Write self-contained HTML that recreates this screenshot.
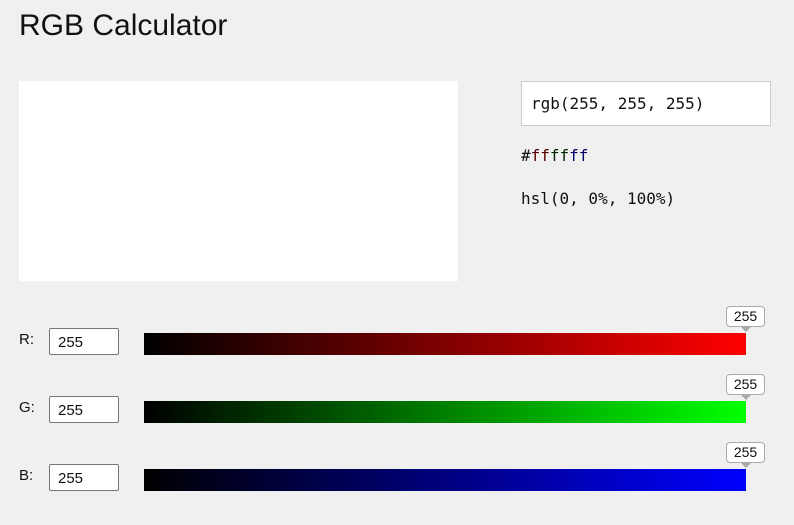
<!DOCTYPE html>
<html><head><style>
body{margin:0;width:794px;height:525px;background:#f0f0f0;font-family:"Liberation Sans",sans-serif;position:relative;overflow:hidden}
.a{position:absolute}
h1{position:absolute;left:19px;top:9px;margin:0;font-weight:normal;font-size:30px;color:#111}
.mono{font-family:"DejaVu Sans Mono","Liberation Mono",monospace;font-size:16px;color:#111}
.inp{position:absolute;left:49px;width:70px;height:27px;background:#fff;border:1px solid #777;border-radius:2px;box-sizing:border-box;font-size:15px;padding:5px 0 0 8px;color:#111}
.lab{position:absolute;left:19px;font-size:15px;color:#111}
.bar{position:absolute;left:144px;width:602px;height:22px}
.tip{position:absolute;left:726px;width:39px;height:21px;background:#fff;border:1px solid #aaa;border-radius:4px;box-sizing:border-box;font-size:14px;text-align:center;line-height:19px;color:#111}
.tip:after{content:"";position:absolute;left:14px;bottom:-6px;border:5px solid transparent;border-top:5px solid #aaa;border-bottom:0}
</style></head><body>
<h1>RGB Calculator</h1>
<div class="a" style="left:19px;top:81px;width:439px;height:200px;background:#fff"></div>
<div class="a mono" style="left:521px;top:81px;width:250px;height:45px;background:#fff;border:1px solid #ccc;box-sizing:border-box;padding:12px 0 0 9px">rgb(255, 255, 255)</div>
<div class="a mono" style="left:521px;top:146px"><span>#</span><span style="color:#500">ff</span><span style="color:#020">ff</span><span style="color:#006">ff</span></div>
<div class="a mono" style="left:521px;top:189px">hsl(0, 0%, 100%)</div>

<div class="lab" style="top:331px">R:</div><div class="inp" style="top:328px">255</div>
<div class="bar" style="top:333px;background:linear-gradient(to right,#000,#f00)"></div>
<div class="tip" style="top:306px">255</div>

<div class="lab" style="top:399px">G:</div><div class="inp" style="top:396px">255</div>
<div class="bar" style="top:401px;background:linear-gradient(to right,#000,#0f0)"></div>
<div class="tip" style="top:374px">255</div>

<div class="lab" style="top:467px">B:</div><div class="inp" style="top:464px">255</div>
<div class="bar" style="top:469px;background:linear-gradient(to right,#000,#00f)"></div>
<div class="tip" style="top:442px">255</div>
</body></html>
